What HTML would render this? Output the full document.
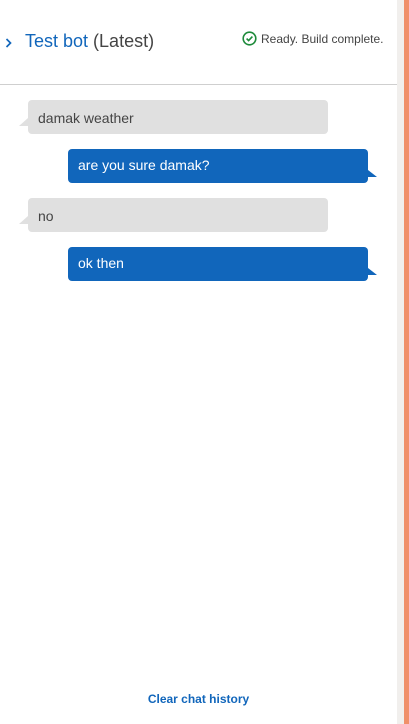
<!DOCTYPE html>
<html><head><style>
body{margin:0;width:409px;height:724px;background:#fff;font-family:"Liberation Sans",sans-serif;position:relative;overflow:hidden}
.a{position:absolute}
.g{background:#e0e0e0;color:#444;border-radius:4px;left:28px;width:300px;height:34px;font-size:14px;line-height:36px;box-sizing:border-box;padding-left:10px}
.g:before{content:"";position:absolute;left:-9px;bottom:8px;border-style:solid;border-width:0 0 8px 9px;border-color:transparent transparent #e0e0e0 transparent}
.b{background:#1166bb;color:#fff;border-radius:4px;left:68px;width:300px;height:34px;font-size:14px;line-height:32px;box-sizing:border-box;padding-left:10px}
.b:after{content:"";position:absolute;right:-9px;bottom:6px;border-style:solid;border-width:0 9px 7px 0;border-color:transparent transparent #1166bb transparent}
</style></head><body>
<svg class="a" style="left:4px;top:37px" width="10" height="12" viewBox="0 0 10 12"><path d="M2.5 2l4 4-4 4" fill="none" stroke="#1166bb" stroke-width="1.7"/></svg>
<div class="a" style="left:25px;top:31px;font-size:18px;color:#1166bb">Test bot <span style="color:#444">(Latest)</span></div>
<svg class="a" style="left:242px;top:31px" width="15" height="15" viewBox="0 0 15 15"><circle cx="7.5" cy="7.5" r="6.3" fill="none" stroke="#1d8a3a" stroke-width="1.6"/><path d="M4.6 7.6l2 2 3.8-4" fill="none" stroke="#1d8a3a" stroke-width="1.6"/></svg>
<div class="a" style="left:261px;top:32px;font-size:12px;color:#444">Ready. Build complete.</div>
<div class="a" style="left:0;top:84px;width:397px;height:1px;background:#cfcfcf"></div>
<div class="a g" style="top:100px">damak weather</div>
<div class="a b" style="top:149px">are you sure damak?</div>
<div class="a g" style="top:198px">no</div>
<div class="a b" style="top:247px">ok then</div>
<div class="a" style="left:0;width:397px;top:692px;text-align:center;font-size:12px;font-weight:bold;color:#1166bb">Clear chat history</div>
<div class="a" style="left:397px;top:0;width:7px;height:724px;background:#f1efed"></div>
<div class="a" style="left:404px;top:0;width:5px;height:724px;background:#f0906a"></div>
</body></html>
